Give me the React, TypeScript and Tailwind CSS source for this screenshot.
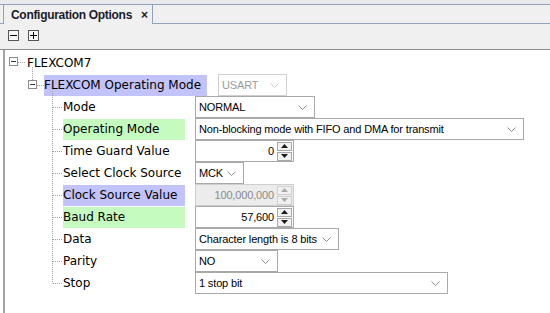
import React from "react";

const fieldFont = { fontFamily: '"Liberation Sans", Arial, sans-serif' };
const labelFont = { fontFamily: '"DejaVu Sans", Verdana, sans-serif' };

function Chevron({ disabled }: { disabled?: boolean }) {
  return (
    <svg width="9" height="5" viewBox="0 0 9 5" className="shrink-0">
      <polyline
        points="0.5,0.5 4.5,4.5 8.5,0.5"
        fill="none"
        stroke={disabled ? "#cfcfcf" : "#909090"}
        strokeWidth="1"
      />
    </svg>
  );
}

function Combo({ value, w, disabled }: { value: string; w: string; disabled?: boolean }) {
  return (
    <div
      className={`flex h-[22px] shrink-0 items-center justify-between border pl-[3px] pr-[7px] text-[11px] tracking-[-0.15px] ${w} ${
        disabled ? "border-[#d0d0d0] bg-white text-[#9a9a9a]" : "border-[#a9a9a9] bg-white text-black"
      }`}
      style={fieldFont}
    >
      <span className="whitespace-nowrap">{value}</span>
      <Chevron disabled={disabled} />
    </div>
  );
}

function Tri({ up, color }: { up?: boolean; color: string }) {
  return (
    <svg width="7" height="4" viewBox="0 0 7 4">
      <polygon points={up ? "3.5,0 7,4 0,4" : "0,0 7,0 3.5,4"} fill={color} />
    </svg>
  );
}

function Spinner({ value, disabled }: { value: string; disabled?: boolean }) {
  const tri = disabled ? "#a8a8a8" : "#1a1a1a";
  return (
    <div
      className={`flex h-[22px] w-[99px] shrink-0 items-center border ${
        disabled ? "border-[#cfcfcf] bg-[#ececec] text-[#8a8a8a]" : "border-[#a9a9a9] bg-white text-black"
      }`}
      style={fieldFont}
    >
      <div className="flex-1 pr-[3px] text-right text-[11px] tracking-[-0.15px]">{value}</div>
      <div className="mr-[1px] flex w-[15px] flex-col gap-[1px]">
        <div
          className={`flex h-[9px] items-center justify-center border ${
            disabled ? "border-[#d0d0d0] bg-[#f0f0f0]" : "border-[#a8a8a8] bg-[#f2f2f2]"
          }`}
        >
          <Tri up color={tri} />
        </div>
        <div
          className={`flex h-[9px] items-center justify-center border ${
            disabled ? "border-[#d0d0d0] bg-[#f0f0f0]" : "border-[#a8a8a8] bg-[#f2f2f2]"
          }`}
        >
          <Tri color={tri} />
        </div>
      </div>
    </div>
  );
}

type Item = { label: string; hl?: "blue" | "green"; field: React.ReactNode };

const items: Item[] = [
  { label: "Mode", field: <Combo value="NORMAL" w="w-[120px]" /> },
  { label: "Operating Mode", hl: "green", field: <Combo value="Non-blocking mode with FIFO and DMA for transmit" w="w-[329px]" /> },
  { label: "Time Guard Value", field: <Spinner value="0" /> },
  { label: "Select Clock Source", field: <Combo value="MCK" w="w-[49px]" /> },
  { label: "Clock Source Value", hl: "blue", field: <Spinner value="100,000,000" disabled /> },
  { label: "Baud Rate", hl: "green", field: <Spinner value="57,600" /> },
  { label: "Data", field: <Combo value="Character length is 8 bits" w="w-[144px]" /> },
  { label: "Parity", field: <Combo value="NO" w="w-[83px]" /> },
  { label: "Stop", field: <Combo value="1 stop bit" w="w-[253px]" /> },
];

function TreeLines() {
  const dot = { stroke: "#a0a0a0", strokeWidth: 1, strokeDasharray: "1 1" };
  const rowCenters = items.map((_, i) => 107 + i * 22);
  return (
    <svg className="pointer-events-none absolute left-0 top-0" width="80" height="313" viewBox="0 0 80 313">
      <rect x="9.5" y="57.5" width="8" height="8" fill="#fff" stroke="#8c8c8c" />
      <line x1="11" y1="61.5" x2="16" y2="61.5" stroke="#333" />
      <line x1="18" y1="62.5" x2="26" y2="62.5" {...dot} />
      <line x1="32.5" y1="67" x2="32.5" y2="81" {...dot} />
      <rect x="28.5" y="80.5" width="8" height="8" fill="#fff" stroke="#8c8c8c" />
      <line x1="30" y1="84.5" x2="35" y2="84.5" stroke="#333" />
      <line x1="37" y1="85.5" x2="44" y2="85.5" {...dot} />
      <line x1="52.5" y1="89" x2="52.5" y2={rowCenters[rowCenters.length - 1] + 0.5} {...dot} />
      {rowCenters.map((c) => (
        <line key={c} x1="53" y1={c + 0.5} x2="62" y2={c + 0.5} {...dot} />
      ))}
    </svg>
  );
}

export default function App() {
  return (
    <div className="relative h-[313px] w-[550px] overflow-hidden bg-white">
      <div className="h-[4px] bg-[#e8eaeb]" />
      <div className="flex h-[20px] bg-[#f0f0f0]">
        <div className="w-[3px] border-b border-t border-[#8fa4ba]" />
        <div className="flex h-[20px] w-[150px] items-center border-l border-r border-t border-[#8fa4ba] bg-[#f0f0f0] pl-[7px]">
          <span
            className="text-[12px] font-bold tracking-[-0.3px] text-[#1b1b2b]"
            style={{ fontFamily: '"Liberation Sans", Arial, sans-serif' }}
          >
            Configuration Options
          </span>
          <span
            className="ml-[9px] text-[12px] font-bold text-[#222]"
            style={{ fontFamily: '"Liberation Sans", Arial, sans-serif' }}
          >
            ×
          </span>
        </div>
        <div className="flex-1 border-b border-t border-[#8fa4ba]" />
      </div>
      <div className="flex h-[26px] items-start gap-[9px] border-b border-[#8c8c8c] bg-[#f0f0f0] pl-[8px] pt-[6px]">
        <div className="flex h-[11px] w-[11px] items-center justify-center border border-[#555] bg-[#fafafa]">
          <div className="h-[1px] w-[7px] bg-black" />
        </div>
        <div className="relative flex h-[11px] w-[11px] items-center justify-center border border-[#555] bg-[#fafafa]">
          <div className="h-[1px] w-[7px] bg-black" />
          <div className="absolute left-[4px] top-[1px] h-[7px] w-[1px] bg-black" />
        </div>
      </div>
      <div className="ml-[3px] h-[263px] border-l-2 border-[#a4a4a4] pt-[2px]" style={labelFont}>
        <div className="flex h-[22px] items-center">
          <div className="w-[22px] shrink-0" />
          <span className="text-[12px] text-black">FLEXCOM7</span>
        </div>
        <div className="flex h-[22px] items-center">
          <div className="w-[39px] shrink-0" />
          <div className="flex h-[21px] w-[163px] shrink-0 items-center bg-[#c3c3fb] text-[12px] text-black">
            FLEXCOM Operating Mode
          </div>
          <div className="w-[11px] shrink-0" />
          <Combo value="USART" w="w-[69px]" disabled />
        </div>
        {items.map((it) => (
          <div key={it.label} className="flex h-[22px] items-center">
            <div className="w-[58px] shrink-0" />
            <div
              className={`flex h-[21px] w-[122px] shrink-0 items-center whitespace-nowrap text-[12px] text-black ${
                it.hl === "blue" ? "bg-[#c3c3fb]" : it.hl === "green" ? "bg-[#c6fbc0]" : ""
              }`}
            >
              {it.label}
            </div>
            <div className="w-[10px] shrink-0" />
            {it.field}
          </div>
        ))}
      </div>
      <TreeLines />
    </div>
  );
}
